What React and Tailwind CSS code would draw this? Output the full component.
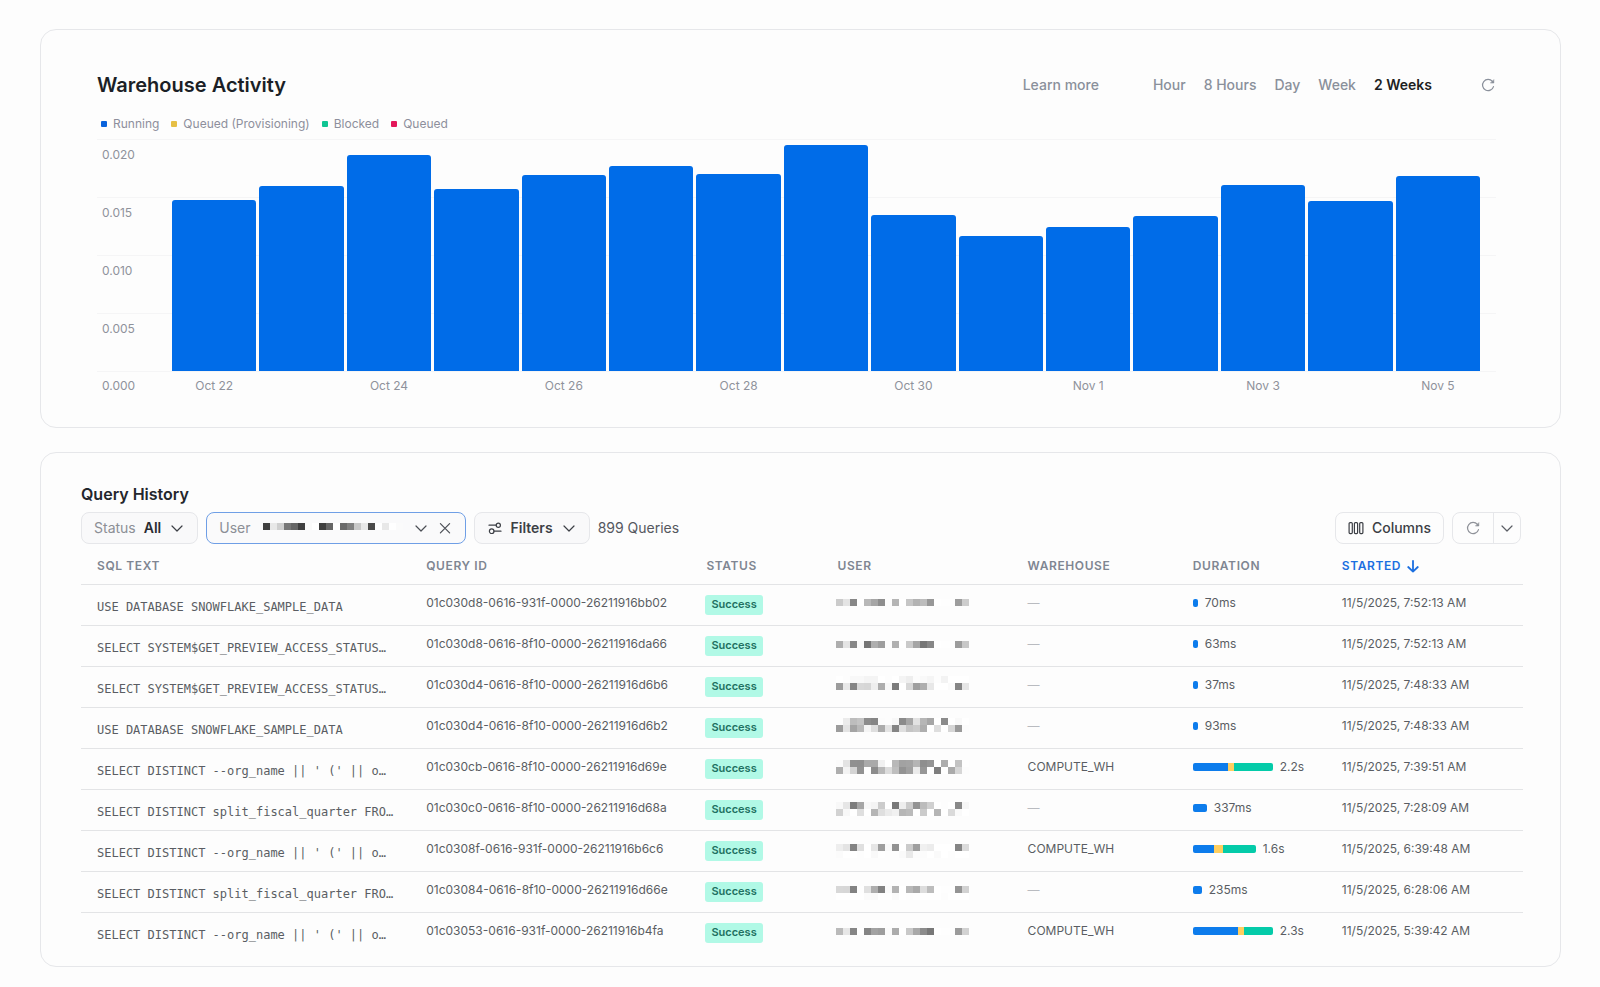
const LEGEND = [
  { label: 'Running', color: 'bg-[#0a63dc]' },
  { label: 'Queued (Provisioning)', color: 'bg-[#e6bf45]' },
  { label: 'Blocked', color: 'bg-[#0fc593]' },
  { label: 'Queued', color: 'bg-[#e3175a]' },
];

const RANGES = ['Hour', '8 Hours', 'Day', 'Week', '2 Weeks'];

const TICKS = ['0.020', '0.015', '0.010', '0.005'];

// credits per day, scale tops out at 0.020
const DAYS = [
  { label: 'Oct 22', value: 0.01474 },
  { label: 'Oct 23', value: 0.01595 },
  { label: 'Oct 24', value: 0.01866 },
  { label: 'Oct 25', value: 0.01569 },
  { label: 'Oct 26', value: 0.0169 },
  { label: 'Oct 27', value: 0.01767 },
  { label: 'Oct 28', value: 0.01698 },
  { label: 'Oct 29', value: 0.01948 },
  { label: 'Oct 30', value: 0.01345 },
  { label: 'Oct 31', value: 0.01164 },
  { label: 'Nov 1', value: 0.01241 },
  { label: 'Nov 2', value: 0.01336 },
  { label: 'Nov 3', value: 0.01603 },
  { label: 'Nov 4', value: 0.01466 },
  { label: 'Nov 5', value: 0.01681 },
];

const ORG_SQL = "SELECT DISTINCT --org_name || ' (' || o…";
const FISCAL_SQL = 'SELECT DISTINCT split_fiscal_quarter FRO…';

// mask: one hex pair of grey per 7px block, rows from the top
const QUERIES = [
  { sql: 'USE DATABASE SNOWFLAKE_SAMPLE_DATA', id: '01c030d8-0616-931f-0000-26211916bb02', bar: [5], duration: '70ms', started: '11/5/2025, 7:52:13 AM', y: 14,
    mask: ['cbe487ffb8a68efdb5ffc6b3bd98fffefe9dcd'] },
  { sql: 'SELECT SYSTEM$GET_PREVIEW_ACCESS_STATUS…', id: '01c030d8-0616-8f10-0000-26211916da66', bar: [5], duration: '63ms', started: '11/5/2025, 7:52:13 AM', y: 15,
    mask: ['aee487fa75ae9efdb0ffcaa57687fffefe9cc8'] },
  { sql: 'SELECT SYSTEM$GET_PREVIEW_ACCESS_STATUS…', id: '01c030d4-0616-8f10-0000-26211916d6b6', bar: [5], duration: '37ms', started: '11/5/2025, 7:48:33 AM', y: 9,
    mask: ['fffdf8f8f4f4fffdfff4eefcf9f5fdf3ffffff', '9ce885d8d6eeadf87cffd89faee8fffffb85e6'] },
  { sql: 'USE DATABASE SNOWFLAKE_SAMPLE_DATA', id: '01c030d4-0616-8f10-0000-26211916d6b2', bar: [5], duration: '93ms', started: '11/5/2025, 7:48:33 AM', y: 10,
    mask: ['fdebbdc48c86fcfdf88ba6e2b6a6ff8bfff9ff', '9ce3a4b9f5deace485dfc5cbaeffdeffd69afc'] },
  { sql: ORG_SQL, id: '01c030cb-0616-8f10-0000-26211916d69e', warehouse: 'COMPUTE_WH', bar: [35, 6, 39], duration: '2.2s', started: '11/5/2025, 7:39:51 AM', y: 11,
    mask: ['fbe3908faaaaf1ffb8a2a4b58e95ffadffc3fe', 'aef3d492fe8cb9dcbe93a0eb97ff7effaad6fc'] },
  { sql: FISCAL_SQL, id: '01c030c0-0616-8f10-0000-26211916d68a', bar: [14], duration: '337ms', started: '11/5/2025, 7:28:09 AM', y: 12,
    mask: ['f8e67da6f8f4ccff79eecb93bcd0fffdff89f6', 'd2f8ffdfffb5dfebf1b6bbffcbffb5ffdafaff'] },
  { sql: ORG_SQL, id: '01c0308f-0616-931f-0000-26211916b6c6', warehouse: 'COMPUTE_WH', bar: [21, 9, 33], duration: '1.6s', started: '11/5/2025, 6:39:48 AM', y: 13,
    mask: ['eee483e0ffe69ef992ffcb9ff0ecffffff85db', 'fbfffffdfff9fefdfdfae9fcfcfffafffdffff'] },
  { sql: FISCAL_SQL, id: '01c03084-0616-8f10-0000-26211916d66e', bar: [9], duration: '235ms', started: '11/5/2025, 6:28:06 AM', y: 14,
    mask: ['d8d783fee0ae82fbb3ffb8aaddbdfffefe95d2', 'fffffffffbfafffffbfffefffffffffdffffff'] },
  { sql: ORG_SQL, id: '01c03053-0616-931f-0000-26211916b4fa', warehouse: 'COMPUTE_WH', bar: [45, 6, 29], duration: '2.3s', started: '11/5/2025, 5:39:42 AM', y: 15,
    mask: ['bae786ff85a29dfbacffc9a98c78fffefe9bd2'] },
];

const USER_MASK = ['3fe8cf77663ffaff3f66ff6a80c8e84affe8fffb'];

const BAR_COLORS = ['bg-[#0d7cec]', 'bg-[#ffcf60]', 'bg-[#04cba9]'];

const COLUMNS = [
  { label: 'SQL Text', width: 'w-[329px]' },
  { label: 'Query ID', width: 'w-[280px]' },
  { label: 'Status', width: 'w-[131px]' },
  { label: 'User', width: 'w-[190px]' },
  { label: 'Warehouse', width: 'w-[165px]' },
  { label: 'Duration', width: 'w-[149px]' },
];

const Icon = ({ width = 1.2, children }) => (
  <svg className="size-4" viewBox="0 0 16 16" fill="none" stroke="currentColor" strokeWidth={width} strokeLinecap="round" strokeLinejoin="round" aria-hidden="true">
    {children}
  </svg>
);

const RefreshIcon = () => (
  <Icon>
    <path d="M13.5 9.6A5.6 5.6 0 1 1 12.4 4.4L13.4 5.4" />
    <path d="M13.8 3V6H10.8Z" fill="currentColor" strokeWidth="0.6" />
  </Icon>
);

const ChevronIcon = () => (
  <Icon>
    <path d="M3 6L8 11L13 6" />
  </Icon>
);

const CloseIcon = () => (
  <Icon>
    <path d="M3.4 3.6L12.6 12.8M12.6 3.6L3.4 12.8" />
  </Icon>
);

const FilterIcon = () => (
  <Icon>
    <path d="M2 5.2H9.2M7 11.2H14" />
    <circle cx="11.3" cy="5.2" r="2.1" />
    <circle cx="4.7" cy="11.2" r="2.3" />
  </Icon>
);

const ColumnsIcon = () => (
  <Icon>
    <rect x="1.1" y="2.6" width="3.2" height="11" rx="1" />
    <rect x="6.4" y="2.6" width="3.2" height="11" rx="1" />
    <rect x="11.7" y="2.6" width="3.2" height="11" rx="1" />
  </Icon>
);

const SortIcon = () => (
  <Icon width={1.8}>
    <path d="M8 2.8V13.6M3.2 9L8 13.6L12.8 9" />
  </Icon>
);

const Mosaic = ({ rows, y, height }) => {
  const shades = rows.map((row) => row.match(/../g));
  return (
    <svg width={shades[0].length * 7} height={height} shapeRendering="crispEdges" className="block" aria-hidden="true">
      {shades.map((row, r) =>
        row.map((s, c) => <rect key={`${r}-${c}`} x={c * 7} y={y + r * 7} width="7" height="7" fill={`#${s}${s}${s}`} />)
      )}
    </svg>
  );
};

const WarehouseActivity = () => (
  <section className="rounded-2xl border border-[#e6e7ea] pt-[41px] pr-16 pb-[33px] pl-14">
    <header className="flex h-7 items-center">
      <h2 className="text-xl font-semibold text-[#1b1f26]">Warehouse Activity</h2>
      <div className="ml-auto flex items-center text-sm font-medium text-[#8a909b]">
        <a href="#learn" className="mr-[54px]">Learn more</a>
        <div className="flex gap-[18px]">
          {RANGES.map((range) => (
            <button key={range} type="button" className={range === '2 Weeks' ? 'font-semibold text-[#1e1f22]' : ''}>
              {range}
            </button>
          ))}
        </div>
        <button type="button" aria-label="Refresh activity" className="ml-12">
          <RefreshIcon />
        </button>
      </div>
    </header>

    <ul className="mt-[15px] flex h-5 items-center gap-3 pl-1 text-xs text-[#8d8f9c]">
      {LEGEND.map((item) => (
        <li key={item.label} className="flex items-center gap-[6px]">
          <span className={`size-[6px] rounded-[1px] ${item.color}`} />
          {item.label}
        </li>
      ))}
    </ul>

    <div className="mt-[5px] grid text-xs text-[#8f929b]">
      {/* Grid lines */}
      <div className="col-start-1 row-start-1 border-b border-[#f5f5f6]">
        {TICKS.map((tick) => (
          <div key={tick} className="h-[58px] border-t border-[#f5f5f6] pt-[7px] pl-[5px]">{tick}</div>
        ))}
      </div>
      {/* Bars */}
      <div className="col-start-1 row-start-1 mr-4 mb-px ml-[75px] flex items-end gap-[3px]">
        {DAYS.map((day) => (
          <div key={day.label} className="flex-1 rounded-t-[3px] bg-[#006ce8]" style={{ height: `${day.value * 5000}%` }} />
        ))}
      </div>
    </div>
    <div className="flex h-[22px] items-end pr-4 text-xs text-[#8f929b]">
      <span className="w-[75px] pl-[5px]">0.000</span>
      <div className="flex flex-1 gap-[3px]">
        {DAYS.map((day, i) => (
          <span key={day.label} className="flex-1 text-center">{i % 2 === 0 ? day.label : ''}</span>
        ))}
      </div>
    </div>
  </section>
);

const QueryHistory = () => (
  <section className="rounded-2xl border border-[#e6e7ea] pt-[29px] pr-[37px] pb-[13px] pl-10">
    <h2 className="text-base font-semibold text-[#23262c]">Query History</h2>

    <div className="mt-[6px] flex h-8 items-stretch gap-2 text-sm text-[#3c3f45]">
      <button type="button" className="flex items-center gap-2 rounded-lg border border-[#e6e7ea] bg-[#f9f9fa] px-3">
        <span className="text-[#8c8f96]">Status</span>
        <span className="font-semibold text-[#2a2c31]">All</span>
        <ChevronIcon />
      </button>
      <div className="flex items-center rounded-lg border border-[#6f9fe6] bg-[#fafafb] px-3 text-[#4b4e55]">
        <span className="mr-3 text-[#8c8f96]">User</span>
        <Mosaic rows={USER_MASK} y={0} height={10} />
        <button type="button" aria-label="Choose user" className="ml-[10px]">
          <ChevronIcon />
        </button>
        <button type="button" aria-label="Clear user" className="ml-2">
          <CloseIcon />
        </button>
      </div>
      <button type="button" className="flex items-center gap-2 rounded-lg border border-[#e6e7ea] bg-[#f9f9fa] px-3">
        <FilterIcon />
        <span className="font-semibold">Filters</span>
        <ChevronIcon />
      </button>
      <span className="self-center text-[#55585f]">899 Queries</span>
      <button type="button" className="ml-auto flex items-center gap-2 rounded-lg border border-[#e6e7ea] px-3 font-medium">
        <ColumnsIcon />
        Columns
      </button>
      <div className="mr-[2px] flex rounded-lg border border-[#e6e7ea] text-[#8f9299]">
        <button type="button" aria-label="Refresh queries" className="px-3">
          <RefreshIcon />
        </button>
        <button type="button" aria-label="Refresh options" className="border-l border-[#e6e7ea] px-[5px] text-[#5a5d64]">
          <ChevronIcon />
        </button>
      </div>
    </div>

    <table className="w-full table-fixed text-left text-xs text-[#5a5d63]">
      <thead>
        <tr className="h-10 text-[#7f8692]">
          {COLUMNS.map((col) => (
            <th key={col.label} className={`pt-[5px] pl-4 font-semibold uppercase tracking-wider ${col.width}`}>{col.label}</th>
          ))}
          <th className="w-[197px] pt-[5px] pl-4 text-[#1b6fe0]">
            <button type="button" className="flex items-center gap-1 font-semibold uppercase tracking-wider">
              Started
              <SortIcon />
            </button>
          </th>
        </tr>
      </thead>
      <tbody>
        {QUERIES.map((q) => (
          <tr key={q.id} className="h-[41px] border-t border-[#e3e4e6]">
            <td className="truncate pt-1 pl-4 font-['DejaVu_Sans_Mono',monospace]">{q.sql}</td>
            <td className="pb-1 pl-4">{q.id}</td>
            <td className="pl-[15px]">
              <span className="inline-flex h-5 items-center rounded-[3px] bg-[#b1f9e6] px-[6px] align-middle text-[11px] font-semibold text-[#1f7162]">
                Success
              </span>
            </td>
            <td className="pl-[15px]">
              <Mosaic rows={q.mask} y={q.y} height={40} />
            </td>
            <td className="pb-1 pl-4">{q.warehouse || <span className="text-[#b9bbc0]">—</span>}</td>
            <td className="pb-1 pl-4">
              <div className="flex items-center gap-[7px]">
                <div className="flex h-2 overflow-hidden rounded-[2px]">
                  {q.bar.map((w, i) => (
                    <span key={i} className={BAR_COLORS[i]} style={{ width: w }} />
                  ))}
                </div>
                {q.duration}
              </div>
            </td>
            <td className="pb-1 pl-4">{q.started}</td>
          </tr>
        ))}
      </tbody>
    </table>
  </section>
);

const App = () => (
  <main className="flex min-h-screen flex-col gap-6 bg-[#fdfdfd] pt-[29px] pr-[39px] pb-5 pl-10 font-['Inter',sans-serif]">
    <WarehouseActivity />
    <QueryHistory />
  </main>
);

export default App;
